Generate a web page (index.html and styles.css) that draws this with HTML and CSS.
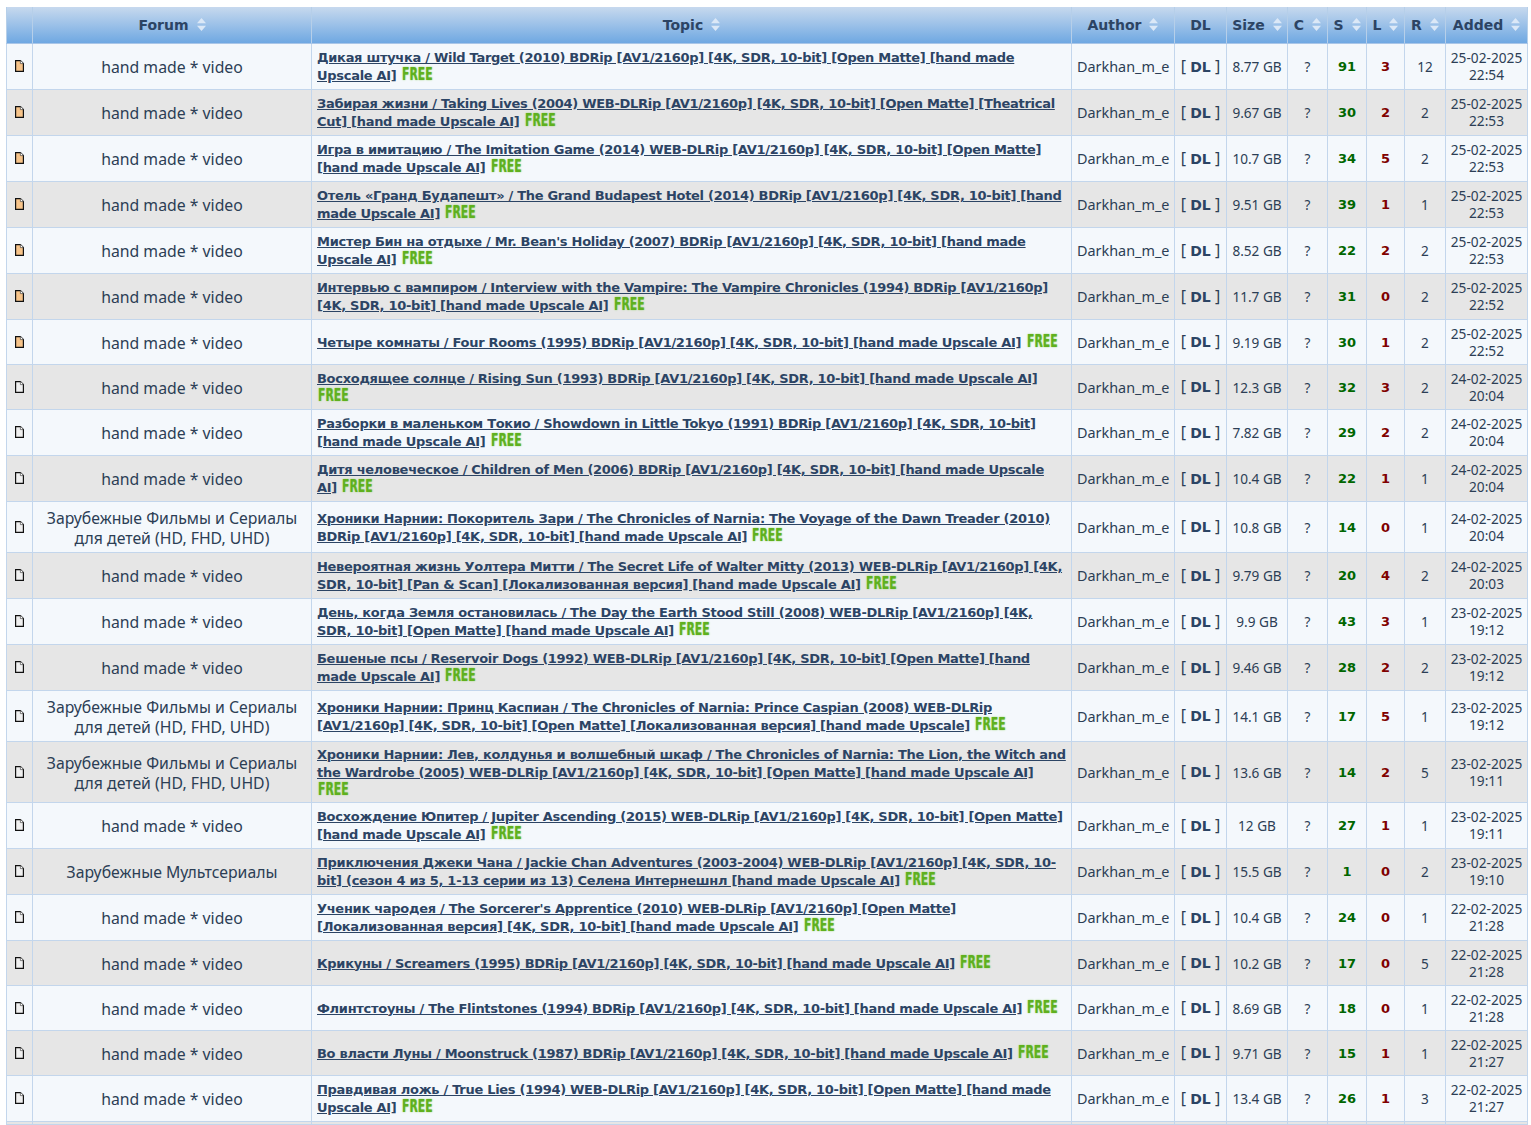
FILE: index.html
```html
<!DOCTYPE html>
<html lang="ru">
<head>
<meta charset="utf-8">
<title>Tracker</title>
<link rel="stylesheet" href="styles.css">
</head>
<body>
<svg class="defs" width="0" height="0"><defs>
<symbol id="sort" viewBox="0 0 9 13"><path d="M4.5 0 9 5.2H0zM4.5 13 0 7.8h9z"/></symbol>
<symbol id="file" viewBox="0 0 9 12"><path d="M.6.6h4.8l3 3v7.8H.6z" fill="currentColor" stroke="#111" stroke-width="1.2"/><path d="M5.4.6v3h3" fill="#fff" stroke="#333" stroke-width=".6"/></symbol>
</defs></svg>
<table class="tracker">
<colgroup><col class="c-ico"><col class="c-forum"><col class="c-topic"><col class="c-author"><col class="c-dl"><col class="c-size"><col class="c-c"><col class="c-s"><col class="c-l"><col class="c-r"><col class="c-added"></colgroup>
<thead><tr>
<th></th>
<th><span class="th">Forum<svg class="sort"><use href="#sort"/></svg></span></th>
<th><span class="th">Topic<svg class="sort"><use href="#sort"/></svg></span></th>
<th><span class="th">Author<svg class="sort"><use href="#sort"/></svg></span></th>
<th>DL</th>
<th><span class="th">Size<svg class="sort"><use href="#sort"/></svg></span></th>
<th><span class="th">C<svg class="sort"><use href="#sort"/></svg></span></th>
<th><span class="th">S<svg class="sort"><use href="#sort"/></svg></span></th>
<th><span class="th">L<svg class="sort"><use href="#sort"/></svg></span></th>
<th><span class="th">R<svg class="sort"><use href="#sort"/></svg></span></th>
<th><span class="th">Added<svg class="sort"><use href="#sort"/></svg></span></th>
</tr></thead>
<tbody>
<tr class="r46"><td class="ico new"><svg class="file"><use href="#file"/></svg></td><td class="forum">hand made * video</td><td class="topic"><a>Дикая штучка / Wild Target (2010) BDRip [AV1/2160p] [4K, SDR, 10-bit] [Open Matte] [hand made Upscale AI]</a> <span class="free">FREE</span></td><td class="author">Darkhan_m_e</td><td class="dl">[ <b>DL</b> ]</td><td class="num">8.77 GB</td><td class="num">?</td><td class="seed">91</td><td class="leech">3</td><td class="num">12</td><td class="date">25-02-2025<br>22:54</td></tr>
<tr class="r46"><td class="ico new"><svg class="file"><use href="#file"/></svg></td><td class="forum">hand made * video</td><td class="topic"><a>Забирая жизни / Taking Lives (2004) WEB-DLRip [AV1/2160p] [4K, SDR, 10-bit] [Open Matte] [Theatrical Cut] [hand made Upscale AI]</a> <span class="free">FREE</span></td><td class="author">Darkhan_m_e</td><td class="dl">[ <b>DL</b> ]</td><td class="num">9.67 GB</td><td class="num">?</td><td class="seed">30</td><td class="leech">2</td><td class="num">2</td><td class="date">25-02-2025<br>22:53</td></tr>
<tr class="r46"><td class="ico new"><svg class="file"><use href="#file"/></svg></td><td class="forum">hand made * video</td><td class="topic"><a>Игра в имитацию / The Imitation Game (2014) WEB-DLRip [AV1/2160p] [4K, SDR, 10-bit] [Open Matte] [hand made Upscale AI]</a> <span class="free">FREE</span></td><td class="author">Darkhan_m_e</td><td class="dl">[ <b>DL</b> ]</td><td class="num">10.7 GB</td><td class="num">?</td><td class="seed">34</td><td class="leech">5</td><td class="num">2</td><td class="date">25-02-2025<br>22:53</td></tr>
<tr class="r46"><td class="ico new"><svg class="file"><use href="#file"/></svg></td><td class="forum">hand made * video</td><td class="topic"><a>Отель «Гранд Будапешт» / The Grand Budapest Hotel (2014) BDRip [AV1/2160p] [4K, SDR, 10-bit] [hand made Upscale AI]</a> <span class="free">FREE</span></td><td class="author">Darkhan_m_e</td><td class="dl">[ <b>DL</b> ]</td><td class="num">9.51 GB</td><td class="num">?</td><td class="seed">39</td><td class="leech">1</td><td class="num">1</td><td class="date">25-02-2025<br>22:53</td></tr>
<tr class="r46"><td class="ico new"><svg class="file"><use href="#file"/></svg></td><td class="forum">hand made * video</td><td class="topic"><a>Мистер Бин на отдыхе / Mr. Bean's Holiday (2007) BDRip [AV1/2160p] [4K, SDR, 10-bit] [hand made Upscale AI]</a> <span class="free">FREE</span></td><td class="author">Darkhan_m_e</td><td class="dl">[ <b>DL</b> ]</td><td class="num">8.52 GB</td><td class="num">?</td><td class="seed">22</td><td class="leech">2</td><td class="num">2</td><td class="date">25-02-2025<br>22:53</td></tr>
<tr class="r46"><td class="ico new"><svg class="file"><use href="#file"/></svg></td><td class="forum">hand made * video</td><td class="topic"><a>Интервью с вампиром / Interview with the Vampire: The Vampire Chronicles (1994) BDRip [AV1/2160p] [4K, SDR, 10-bit] [hand made Upscale AI]</a> <span class="free">FREE</span></td><td class="author">Darkhan_m_e</td><td class="dl">[ <b>DL</b> ]</td><td class="num">11.7 GB</td><td class="num">?</td><td class="seed">31</td><td class="leech">0</td><td class="num">2</td><td class="date">25-02-2025<br>22:52</td></tr>
<tr class="r45"><td class="ico new"><svg class="file"><use href="#file"/></svg></td><td class="forum">hand made * video</td><td class="topic"><a>Четыре комнаты / Four Rooms (1995) BDRip [AV1/2160p] [4K, SDR, 10-bit] [hand made Upscale AI]</a> <span class="free">FREE</span></td><td class="author">Darkhan_m_e</td><td class="dl">[ <b>DL</b> ]</td><td class="num">9.19 GB</td><td class="num">?</td><td class="seed">30</td><td class="leech">1</td><td class="num">2</td><td class="date">25-02-2025<br>22:52</td></tr>
<tr class="r45"><td class="ico"><svg class="file"><use href="#file"/></svg></td><td class="forum">hand made * video</td><td class="topic"><a>Восходящее солнце / Rising Sun (1993) BDRip [AV1/2160p] [4K, SDR, 10-bit] [hand made Upscale AI]</a> <span class="free">FREE</span></td><td class="author">Darkhan_m_e</td><td class="dl">[ <b>DL</b> ]</td><td class="num">12.3 GB</td><td class="num">?</td><td class="seed">32</td><td class="leech">3</td><td class="num">2</td><td class="date">24-02-2025<br>20:04</td></tr>
<tr class="r46"><td class="ico"><svg class="file"><use href="#file"/></svg></td><td class="forum">hand made * video</td><td class="topic"><a>Разборки в маленьком Токио / Showdown in Little Tokyo (1991) BDRip [AV1/2160p] [4K, SDR, 10-bit] [hand made Upscale AI]</a> <span class="free">FREE</span></td><td class="author">Darkhan_m_e</td><td class="dl">[ <b>DL</b> ]</td><td class="num">7.82 GB</td><td class="num">?</td><td class="seed">29</td><td class="leech">2</td><td class="num">2</td><td class="date">24-02-2025<br>20:04</td></tr>
<tr class="r46"><td class="ico"><svg class="file"><use href="#file"/></svg></td><td class="forum">hand made * video</td><td class="topic"><a>Дитя человеческое / Children of Men (2006) BDRip [AV1/2160p] [4K, SDR, 10-bit] [hand made Upscale AI]</a> <span class="free">FREE</span></td><td class="author">Darkhan_m_e</td><td class="dl">[ <b>DL</b> ]</td><td class="num">10.4 GB</td><td class="num">?</td><td class="seed">22</td><td class="leech">1</td><td class="num">1</td><td class="date">24-02-2025<br>20:04</td></tr>
<tr class="r51"><td class="ico"><svg class="file"><use href="#file"/></svg></td><td class="forum">Зарубежные Фильмы и Сериалы для детей (HD, FHD, UHD)</td><td class="topic"><a>Хроники Нарнии: Покоритель Зари / The Chronicles of Narnia: The Voyage of the Dawn Treader (2010) BDRip [AV1/2160p] [4K, SDR, 10-bit] [hand made Upscale AI]</a> <span class="free">FREE</span></td><td class="author">Darkhan_m_e</td><td class="dl">[ <b>DL</b> ]</td><td class="num">10.8 GB</td><td class="num">?</td><td class="seed">14</td><td class="leech">0</td><td class="num">1</td><td class="date">24-02-2025<br>20:04</td></tr>
<tr class="r46"><td class="ico"><svg class="file"><use href="#file"/></svg></td><td class="forum">hand made * video</td><td class="topic"><a>Невероятная жизнь Уолтера Митти / The Secret Life of Walter Mitty (2013) WEB-DLRip [AV1/2160p] [4K, SDR, 10-bit] [Pan &amp; Scan] [Локализованная версия] [hand made Upscale AI]</a> <span class="free">FREE</span></td><td class="author">Darkhan_m_e</td><td class="dl">[ <b>DL</b> ]</td><td class="num">9.79 GB</td><td class="num">?</td><td class="seed">20</td><td class="leech">4</td><td class="num">2</td><td class="date">24-02-2025<br>20:03</td></tr>
<tr class="r46"><td class="ico"><svg class="file"><use href="#file"/></svg></td><td class="forum">hand made * video</td><td class="topic"><a>День, когда Земля остановилась / The Day the Earth Stood Still (2008) WEB-DLRip [AV1/2160p] [4K, SDR, 10-bit] [Open Matte] [hand made Upscale AI]</a> <span class="free">FREE</span></td><td class="author">Darkhan_m_e</td><td class="dl">[ <b>DL</b> ]</td><td class="num">9.9 GB</td><td class="num">?</td><td class="seed">43</td><td class="leech">3</td><td class="num">1</td><td class="date">23-02-2025<br>19:12</td></tr>
<tr class="r46"><td class="ico"><svg class="file"><use href="#file"/></svg></td><td class="forum">hand made * video</td><td class="topic"><a>Бешеные псы / Reservoir Dogs (1992) WEB-DLRip [AV1/2160p] [4K, SDR, 10-bit] [Open Matte] [hand made Upscale AI]</a> <span class="free">FREE</span></td><td class="author">Darkhan_m_e</td><td class="dl">[ <b>DL</b> ]</td><td class="num">9.46 GB</td><td class="num">?</td><td class="seed">28</td><td class="leech">2</td><td class="num">2</td><td class="date">23-02-2025<br>19:12</td></tr>
<tr class="r51"><td class="ico"><svg class="file"><use href="#file"/></svg></td><td class="forum">Зарубежные Фильмы и Сериалы для детей (HD, FHD, UHD)</td><td class="topic"><a>Хроники Нарнии: Принц Каспиан / The Chronicles of Narnia: Prince Caspian (2008) WEB-DLRip [AV1/2160p] [4K, SDR, 10-bit] [Open Matte] [Локализованная версия] [hand made Upscale]</a> <span class="free">FREE</span></td><td class="author">Darkhan_m_e</td><td class="dl">[ <b>DL</b> ]</td><td class="num">14.1 GB</td><td class="num">?</td><td class="seed">17</td><td class="leech">5</td><td class="num">1</td><td class="date">23-02-2025<br>19:12</td></tr>
<tr class="r61"><td class="ico"><svg class="file"><use href="#file"/></svg></td><td class="forum">Зарубежные Фильмы и Сериалы для детей (HD, FHD, UHD)</td><td class="topic"><a>Хроники Нарнии: Лев, колдунья и волшебный шкаф / The Chronicles of Narnia: The Lion, the Witch and the Wardrobe (2005) WEB-DLRip [AV1/2160p] [4K, SDR, 10-bit] [Open Matte] [hand made Upscale AI]</a> <span class="free">FREE</span></td><td class="author">Darkhan_m_e</td><td class="dl">[ <b>DL</b> ]</td><td class="num">13.6 GB</td><td class="num">?</td><td class="seed">14</td><td class="leech">2</td><td class="num">5</td><td class="date">23-02-2025<br>19:11</td></tr>
<tr class="r46"><td class="ico"><svg class="file"><use href="#file"/></svg></td><td class="forum">hand made * video</td><td class="topic"><a>Восхождение Юпитер / Jupiter Ascending (2015) WEB-DLRip [AV1/2160p] [4K, SDR, 10-bit] [Open Matte] [hand made Upscale AI]</a> <span class="free">FREE</span></td><td class="author">Darkhan_m_e</td><td class="dl">[ <b>DL</b> ]</td><td class="num">12 GB</td><td class="num">?</td><td class="seed">27</td><td class="leech">1</td><td class="num">1</td><td class="date">23-02-2025<br>19:11</td></tr>
<tr class="r46"><td class="ico"><svg class="file"><use href="#file"/></svg></td><td class="forum">Зарубежные Мультсериалы</td><td class="topic"><a>Приключения Джеки Чана / Jackie Chan Adventures (2003-2004) WEB-DLRip [AV1/2160p] [4K, SDR, 10-bit] (сезон 4 из 5, 1-13 серии из 13) Селена Интернешнл [hand made Upscale AI]</a> <span class="free">FREE</span></td><td class="author">Darkhan_m_e</td><td class="dl">[ <b>DL</b> ]</td><td class="num">15.5 GB</td><td class="num">?</td><td class="seed">1</td><td class="leech">0</td><td class="num">2</td><td class="date">23-02-2025<br>19:10</td></tr>
<tr class="r46"><td class="ico"><svg class="file"><use href="#file"/></svg></td><td class="forum">hand made * video</td><td class="topic"><a>Ученик чародея / The Sorcerer's Apprentice (2010) WEB-DLRip [AV1/2160p] [Open Matte] [Локализованная версия] [4K, SDR, 10-bit] [hand made Upscale AI]</a> <span class="free">FREE</span></td><td class="author">Darkhan_m_e</td><td class="dl">[ <b>DL</b> ]</td><td class="num">10.4 GB</td><td class="num">?</td><td class="seed">24</td><td class="leech">0</td><td class="num">1</td><td class="date">22-02-2025<br>21:28</td></tr>
<tr class="r45"><td class="ico"><svg class="file"><use href="#file"/></svg></td><td class="forum">hand made * video</td><td class="topic"><a>Крикуны / Screamers (1995) BDRip [AV1/2160p] [4K, SDR, 10-bit] [hand made Upscale AI]</a> <span class="free">FREE</span></td><td class="author">Darkhan_m_e</td><td class="dl">[ <b>DL</b> ]</td><td class="num">10.2 GB</td><td class="num">?</td><td class="seed">17</td><td class="leech">0</td><td class="num">5</td><td class="date">22-02-2025<br>21:28</td></tr>
<tr class="r45"><td class="ico"><svg class="file"><use href="#file"/></svg></td><td class="forum">hand made * video</td><td class="topic"><a>Флинтстоуны / The Flintstones (1994) BDRip [AV1/2160p] [4K, SDR, 10-bit] [hand made Upscale AI]</a> <span class="free">FREE</span></td><td class="author">Darkhan_m_e</td><td class="dl">[ <b>DL</b> ]</td><td class="num">8.69 GB</td><td class="num">?</td><td class="seed">18</td><td class="leech">0</td><td class="num">1</td><td class="date">22-02-2025<br>21:28</td></tr>
<tr class="r45"><td class="ico"><svg class="file"><use href="#file"/></svg></td><td class="forum">hand made * video</td><td class="topic"><a>Во власти Луны / Moonstruck (1987) BDRip [AV1/2160p] [4K, SDR, 10-bit] [hand made Upscale AI]</a> <span class="free">FREE</span></td><td class="author">Darkhan_m_e</td><td class="dl">[ <b>DL</b> ]</td><td class="num">9.71 GB</td><td class="num">?</td><td class="seed">15</td><td class="leech">1</td><td class="num">1</td><td class="date">22-02-2025<br>21:27</td></tr>
<tr class="r46"><td class="ico"><svg class="file"><use href="#file"/></svg></td><td class="forum">hand made * video</td><td class="topic"><a>Правдивая ложь / True Lies (1994) WEB-DLRip [AV1/2160p] [4K, SDR, 10-bit] [Open Matte] [hand made Upscale AI]</a> <span class="free">FREE</span></td><td class="author">Darkhan_m_e</td><td class="dl">[ <b>DL</b> ]</td><td class="num">13.4 GB</td><td class="num">?</td><td class="seed">26</td><td class="leech">1</td><td class="num">3</td><td class="date">22-02-2025<br>21:27</td></tr>
<tr class="tail"><td></td><td></td><td></td><td></td><td></td><td></td><td></td><td></td><td></td><td></td><td></td></tr>
</tbody>
</table>
</body>
</html>
```
FILE: styles.css
```css
html { height: 100%; overflow: hidden; background: #fff; }
body { margin: 0; padding: 7px 4px 0 6px; height: 100%; box-sizing: border-box; overflow: hidden; font-family: "Noto Sans", "Open Sans", sans-serif; color: #2c3e55; }
.defs { position: absolute; }
.tracker { width: 1521px; table-layout: fixed; border-collapse: collapse; font-size: 14px; }
.c-ico { width: 26px; } .c-forum { width: 279px; } .c-topic { width: 760px; } .c-author { width: 103px; }
.c-dl { width: 52px; } .c-size { width: 61px; } .c-c { width: 40px; } .c-s { width: 39px; } .c-l { width: 38px; } .c-r { width: 41px; } .c-added { width: 82px; }
thead tr { height: 36px; background: linear-gradient(#c7d9ee, #6fa8e2); }
th { border: 1px solid #b6cfe9; border-bottom-color: #a9c6e8; border-top: 0; padding: 0; font: bold 14px/18px "DejaVu Sans", sans-serif; color: #2c4464; text-align: center; vertical-align: middle; }
.th { display: inline-flex; align-items: center; gap: 8px; }
.sort { width: 9px; height: 13px; fill: #dbe8f7; flex: none; }
td { border: 1px solid #c3d6ec; padding: 4px 5px 2px; text-align: center; vertical-align: middle; line-height: 18px; white-space: nowrap; }
tbody tr { background: #f4f8fc; }
tbody tr:nth-child(even) { background: #e6e6e6; }
.r45 { height: 45px; } .r46 { height: 46px; } .r51 { height: 51px; } .r61 { height: 61px; }
.tail td { padding: 0; height: 2px; }
.ico { padding: 0; color: #f0f0f0; line-height: 0; }
.ico.new { color: #f7c48a; }
.file { width: 9px; height: 12px; }
.forum { font-size: 15.8px; line-height: 20px; white-space: normal; padding: 4px 10px 2px; }
.topic { text-align: left; white-space: normal; font: bold 13px/18px "DejaVu Sans", sans-serif; letter-spacing: -0.29px; color: #2c4464; }
.topic a { text-decoration: underline; }
.free { display: inline-block; width: 30px; margin-left: 1px; font: bold 17px/12px "DejaVu Sans Condensed", "DejaVu Sans", sans-serif; letter-spacing: 0; color: #5fb01f; text-shadow: 0 0 2px #8fd060; transform: scaleX(.71); transform-origin: left center; }
.author { font-size: 14.4px; }
.dl { font-size: 16px; padding: 2px 5px; }
.dl b { font-family: "DejaVu Sans", sans-serif; font-size: 14px; color: #2c4464; }
.num { font-size: 13.6px; }
.seed, .leech { font: bold 13px/18px "DejaVu Sans", sans-serif; }
.seed { color: #006600; } .leech { color: #800000; }
.date { font-size: 13.7px; line-height: 17px; padding: 3px 0; }
```
